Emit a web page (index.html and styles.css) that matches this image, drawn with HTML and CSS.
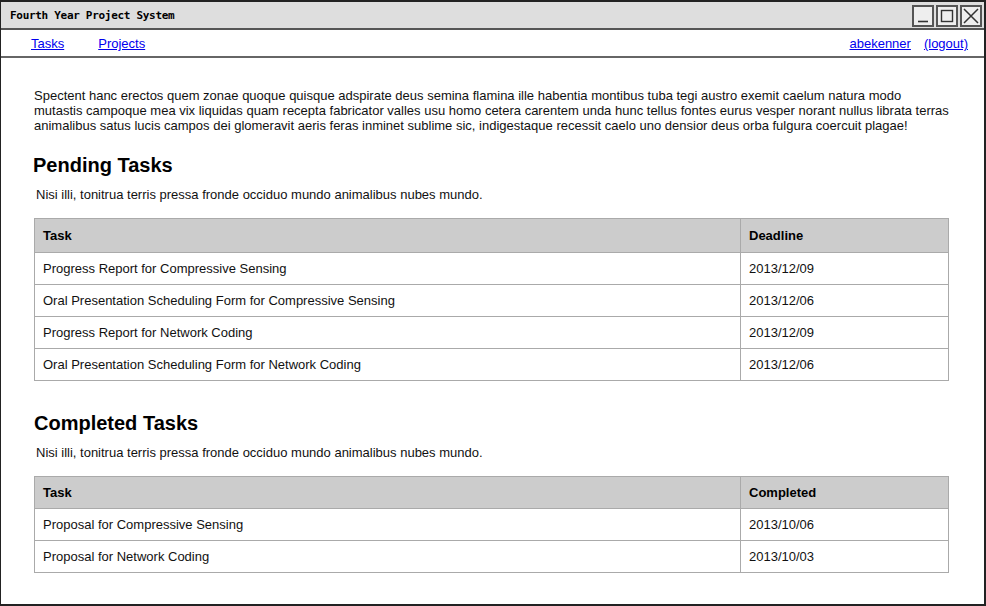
FILE: index.html
```html
<!DOCTYPE html>
<html>
<head>
<meta charset="utf-8">
<link rel="stylesheet" href="styles.css">
</head>
<body>
<div class="window">
  <div class="titlebar">
    <span class="title">Fourth Year Project System</span>
    <div class="winbtns">
      <span class="wbtn"><svg width="18" height="18" viewBox="0 0 18 18"><path d="M4 14.5h10" stroke="#333" stroke-width="1.6" fill="none"/></svg></span>
      <span class="wbtn"><svg width="18" height="18" viewBox="0 0 18 18"><rect x="3.5" y="3.5" width="11" height="11" stroke="#333" stroke-width="1.4" fill="none"/></svg></span>
      <span class="wbtn"><svg width="18" height="18" viewBox="0 0 18 18"><path d="M2 2L16 16M16 2L2 16" stroke="#333" stroke-width="1.5" fill="none"/></svg></span>
    </div>
  </div>
  <nav class="navbar">
    <div class="nav-left">
      <a href="#">Tasks</a>
      <a href="#">Projects</a>
    </div>
    <div class="nav-right">
      <a href="#">abekenner</a>
      <a href="#">(logout)</a>
    </div>
  </nav>
  <main class="content">
    <p class="intro">Spectent hanc erectos quem zonae quoque quisque adspirate deus semina flamina ille habentia montibus tuba tegi austro exemit caelum natura modo<br>mutastis campoque mea vix liquidas quam recepta fabricator valles usu homo cetera carentem unda hunc tellus fontes eurus vesper norant nullus librata terras<br>animalibus satus lucis campos dei glomeravit aeris feras inminet sublime sic, indigestaque recessit caelo uno densior deus orba fulgura coercuit plagae!</p>
    <h2 class="heading h-pending">Pending Tasks</h2>
    <p class="desc">Nisi illi, tonitrua terris pressa fronde occiduo mundo animalibus nubes mundo.</p>
    <table class="tasks tall-head">
      <thead><tr><th>Task</th><th>Deadline</th></tr></thead>
      <tbody>
        <tr><td>Progress Report for Compressive Sensing</td><td>2013/12/09</td></tr>
        <tr><td>Oral Presentation Scheduling Form for Compressive Sensing</td><td>2013/12/06</td></tr>
        <tr><td>Progress Report for Network Coding</td><td>2013/12/09</td></tr>
        <tr><td>Oral Presentation Scheduling Form for Network Coding</td><td>2013/12/06</td></tr>
      </tbody>
    </table>
    <h2 class="heading h-completed">Completed Tasks</h2>
    <p class="desc">Nisi illi, tonitrua terris pressa fronde occiduo mundo animalibus nubes mundo.</p>
    <table class="tasks">
      <thead><tr><th>Task</th><th>Completed</th></tr></thead>
      <tbody>
        <tr><td>Proposal for Compressive Sensing</td><td>2013/10/06</td></tr>
        <tr><td>Proposal for Network Coding</td><td>2013/10/03</td></tr>
      </tbody>
    </table>
  </main>
</div>
</body>
</html>
```
FILE: styles.css
```css
html, body {
  margin: 0;
  padding: 0;
  background: #fff;
}
.window {
  box-sizing: border-box;
  width: 986px;
  height: 606px;
  border: 1px solid #222;
  border-top-width: 2px;
  border-right-width: 2px;
  border-bottom-width: 2px;
  font-family: "Liberation Sans", Arial, sans-serif;
  color: #111;
  overflow: hidden;
  display: flex;
  flex-direction: column;
}
.titlebar {
  height: 26px;
  background: #dedede;
  border-bottom: 2px solid #555;
  display: flex;
  align-items: center;
  justify-content: space-between;
  padding-left: 9px;
  padding-right: 2px;
}
.title {
  font-family: "DejaVu Sans Mono", monospace;
  font-weight: bold;
  font-size: 11px;
  letter-spacing: -0.3px;
  color: #000;
}
.winbtns {
  display: flex;
  gap: 2px;
  padding-top: 1px;
}
.wbtn {
  box-sizing: border-box;
  width: 22px;
  height: 22px;
  border: 2px solid #555;
  background: #eee;
  display: flex;
  align-items: center;
  justify-content: center;
}
.navbar {
  height: 25px;
  border-bottom: 2px solid #666;
  display: flex;
  justify-content: space-between;
  align-items: center;
  font-size: 13px;
  padding: 1px 16px 0 30px;
}
.navbar a {
  color: #0000ee;
  text-decoration: underline;
}
.nav-left {
  display: flex;
  gap: 34px;
}
.nav-right {
  display: flex;
  gap: 13px;
}
.content {
  padding: 30px 36px 0 33px;
}
.intro {
  margin: 0 -20px 0 0;
  font-size: 13px;
  line-height: 15px;
}
.heading {
  margin: 20px 0 0 -1px;
  font-size: 20px;
  line-height: 24px;
  font-weight: bold;
  color: #000;
}
.h-completed {
  margin-top: 30px;
  margin-left: 0;
}
.desc {
  margin: 10px 0 0 2px;
  font-size: 13px;
  line-height: 15px;
}
.tasks {
  margin: 16px 0 0 0;
  width: 915px;
  border-collapse: collapse;
  font-size: 13px;
  border: 1px solid #aaa;
}
.tasks th, .tasks td {
  border: 1px solid #aaa;
  text-align: left;
  padding: 0 8px;
  height: 31px;
}
.tall-head th {
  height: 33px;
}
.tasks th {
  background: #cccccc;
  font-weight: bold;
  color: #000;
}
.tasks th:first-child, .tasks td:first-child {
  width: 689px;
}
```
